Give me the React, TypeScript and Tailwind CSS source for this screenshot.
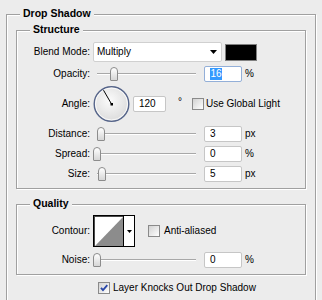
import React from "react";

const groove =
  "border border-[#a0a0a0] shadow-[inset_1px_1px_0_#fff,1px_1px_0_#fff]";

const Legend = ({ children }: { children: React.ReactNode }) => (
  <span className="absolute left-[13px] top-[-8px] bg-[#ececec] px-[3px] text-[10.5px] font-bold leading-[12px] text-black">
    {children}
  </span>
);

const Label = ({ children }: { children: React.ReactNode }) => (
  <div className="w-[73px] shrink-0 text-right">{children}</div>
);

const Slider = ({ thumb }: { thumb: string }) => (
  <div className="relative ml-[3px] h-[14px] w-[103px] shrink-0">
    <div className="absolute left-[4px] right-0 top-[6px] h-[2px] border-t border-[#a8a8a8] bg-white" />
    <div
      className={`absolute top-0 h-[14px] w-[8px] rounded-t-[4px] rounded-b-[1px] border border-[#8c8c8c] bg-linear-to-b from-white to-[#d6d6d6] ${thumb}`}
    />
  </div>
);

const Field = ({
  value,
  width = "w-[38px]",
  ml = "ml-[8px]",
  focus = false,
}: {
  value: string;
  width?: string;
  ml?: string;
  focus?: boolean;
}) => (
  <div
    className={`${ml} ${width} flex h-[16px] shrink-0 items-center rounded-[2px] border bg-white pl-[5px] ${
      focus ? "border-[#93afd8]" : "border-[#c6c6c6]"
    }`}
  >
    {focus ? (
      <span className="bg-[#3399ff] px-[0.5px] leading-[12px] text-white">{value}</span>
    ) : (
      <span>{value}</span>
    )}
  </div>
);

const Check = ({ checked = false }: { checked?: boolean }) => (
  <div className="relative h-[12px] w-[12px] shrink-0 border border-[#8a8a8a] bg-linear-to-br from-[#d2d2d2] to-white">
    {checked && (
      <svg
        className="absolute left-[0px] top-[0px]"
        width="10"
        height="10"
        viewBox="0 0 10 10"
      >
        <path
          d="M2 4.8 L4 7.2 L8.3 2.2"
          fill="none"
          stroke="#2846a8"
          strokeWidth="1.8"
        />
      </svg>
    )}
  </div>
);

const SliderRow = ({
  label,
  thumb,
  value,
  unit,
  focus,
}: {
  label: string;
  thumb: string;
  value: string;
  unit: string;
  focus?: boolean;
}) => (
  <div className="flex h-[18px] items-center">
    <Label>{label}</Label>
    <Slider thumb={thumb} />
    <Field value={value} focus={focus} />
    <span className="ml-[3px]">{unit}</span>
  </div>
);

export default function App() {
  return (
    <div className="h-[300px] w-[322px] overflow-hidden bg-[#ececec] font-['Liberation_Sans',Arial,sans-serif] text-[10px] leading-[12px] text-black">
      <div className={`relative ml-[6px] mt-[14px] w-[310px] px-[9px] pb-[30px] pt-[15px] ${groove}`}>
        <Legend>Drop Shadow</Legend>

        {/* Structure */}
        <div className={`relative w-[290px] pb-[5px] pt-[11px] ${groove}`}>
          <Legend>Structure</Legend>

          <div className="flex h-[20px] items-center">
            <Label>Blend Mode:</Label>
            <div className="ml-[3px] flex h-[20px] w-[129px] items-center justify-between rounded-[2px] border border-[#d0d0d0] bg-white pl-[3px] pr-[4px]">
              <span>Multiply</span>
              <svg width="7" height="4" viewBox="0 0 7 4">
                <path d="M0 0H7L3.5 4Z" fill="#000" />
              </svg>
            </div>
            <div className="ml-[3px] h-[17px] w-[32px] border border-[#808080] bg-black" />
          </div>

          <div className="mt-[3px]">
            <SliderRow label="Opacity:" thumb="left-[17px]" value="16" unit="%" focus />
          </div>

          <div className="mt-[2px] flex h-[38px] items-center">
            <Label>Angle:</Label>
            <svg className="ml-[3px] shrink-0" width="37" height="38" viewBox="0 0 37 38">
              <defs>
                <radialGradient id="dial" cx="45%" cy="40%" r="60%">
                  <stop offset="0" stopColor="#fbfbfb" />
                  <stop offset="1" stopColor="#dcdcdc" />
                </radialGradient>
              </defs>
              <circle cx="18.5" cy="19" r="17.3" fill="url(#dial)" stroke="#56658a" strokeWidth="1.4" />
              <circle cx="18.5" cy="19" r="16" fill="none" stroke="#ffffff" strokeWidth="0.8" />
              <line x1="18.5" y1="19" x2="10.5" y2="5.2" stroke="#000" strokeWidth="1" />
              <rect x="17.5" y="18" width="2.5" height="2.5" fill="#000" />
            </svg>
            <Field value="120" width="w-[33px]" ml="ml-[3px]" />
            <span className="ml-[12px] self-start pt-[11px]">°</span>
            <div className="ml-[10px]">
              <Check />
            </div>
            <span className="ml-[2px]">Use Global Light</span>
          </div>

          <div className="mt-[2px]">
            <SliderRow label="Distance:" thumb="left-[4px]" value="3" unit="px" />
          </div>
          <div className="mt-[2px]">
            <SliderRow label="Spread:" thumb="left-[0px]" value="0" unit="%" />
          </div>
          <div className="mt-[2px]">
            <SliderRow label="Size:" thumb="left-[5px]" value="5" unit="px" />
          </div>
        </div>

        {/* Quality */}
        <div className={`relative mt-[15px] w-[290px] pb-[5px] pt-[10px] ${groove}`}>
          <Legend>Quality</Legend>

          <div className="flex h-[32px] items-center">
            <Label>Contour:</Label>
            <div className="ml-[3px] flex h-[32px] shrink-0">
              <div className="h-full w-[31px] border border-black bg-white shadow-[inset_1px_1px_0_#4a4a4a]">
                <svg width="29" height="30" viewBox="0 0 29 30">
                  <polygon points="1,30 29,1 29,30" fill="#8c8c8c" />
                </svg>
              </div>
              <div className="flex h-full w-[11px] items-center justify-center border-y border-r border-black bg-white">
                <svg width="5" height="3" viewBox="0 0 5 3">
                  <path d="M0 0H5L2.5 3Z" fill="#000" />
                </svg>
              </div>
            </div>
            <div className="ml-[13px]">
              <Check />
            </div>
            <span className="ml-[4px]">Anti-aliased</span>
          </div>

          <div className="mt-[4px]">
            <SliderRow label="Noise:" thumb="left-[0px]" value="0" unit="%" />
          </div>
        </div>

        <div className="mt-[6px] flex h-[14px] items-center pl-[82px]">
          <Check checked />
          <span className="ml-[3px]">Layer Knocks Out Drop Shadow</span>
        </div>
      </div>
    </div>
  );
}
